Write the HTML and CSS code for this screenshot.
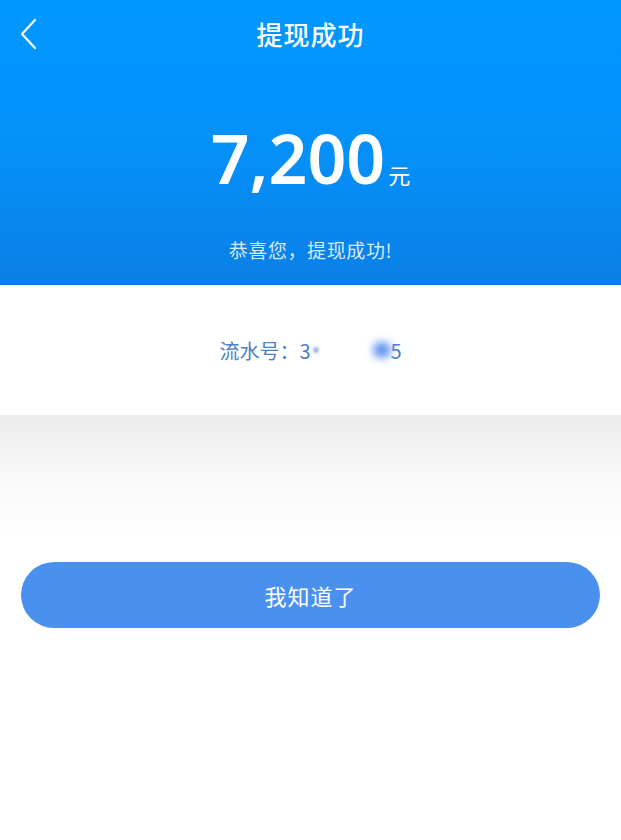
FILE: index.html
```html
<!DOCTYPE html>
<html lang="zh-CN">
<head>
    <meta charset="UTF-8">
    <meta name="viewport" content="width=device-width, initial-scale=1.0">
    <title>提现成功</title>
    <link rel="stylesheet" href="styles.css">
</head>
<body>

    <div class="header">
        <div class="nav">
            <a class="back" href="#">
                <svg width="18" height="32" viewBox="0 0 18 32">
                    <polyline points="15,2 2,16 15,30" fill="none" stroke="#fff" stroke-width="2.2" stroke-linecap="round" stroke-linejoin="round"/>
                </svg>
            </a>
            <div class="nav-title">提现成功</div>
        </div>
        <div class="amount">
            <span class="amount-num">7,200</span><span class="amount-unit">元</span>
        </div>
        <div class="tip">恭喜您，提现成功!</div>
    </div>

    <div class="serial">
        <span>流水号：3</span><span class="mask"><i class="dot"></i><i class="blob"></i></span><span>5</span>
    </div>

    <div class="shade"></div>

    <div class="actions">
        <button class="btn">我知道了</button>
    </div>

</body>
</html>
```

FILE: styles.css
```css
body {
    margin: 0;
    font-family: "Noto Sans CJK SC", "Noto Sans", sans-serif;
    background-color: #fff;
}
.header {
    height: 283px;
    background: linear-gradient(to bottom, #0098ff 0%, #0590f8 55%, #0a7fe6 100%);
    border-bottom: 2px solid #1670d0;
    color: #fff;
}
.nav {
    height: 66px;
    display: flex;
    align-items: center;
    justify-content: center;
    position: relative;
}
.back {
    position: absolute;
    left: 20px;
    top: 18px;
    display: block;
}
.nav-title {
    font-size: 26px;
    font-weight: 500;
    letter-spacing: 1px;
}
.amount {
    display: flex;
    justify-content: center;
    align-items: baseline;
    margin-top: 58px;
    line-height: 1;
}
.amount-num {
    font-family: "Noto Sans", sans-serif;
    font-size: 68px;
    font-weight: 600;
}
.amount-unit {
    font-size: 22px;
    margin-left: 3px;
}
.tip {
    text-align: center;
    font-size: 19px;
    letter-spacing: 0.6px;
    color: rgba(255, 255, 255, 0.85);
    margin-top: 44px;
}
.serial {
    height: 130px;
    display: flex;
    justify-content: center;
    align-items: center;
    font-size: 20px;
    color: #4a80c8;
}
.mask {
    display: inline-block;
    width: 80px;
    height: 24px;
    position: relative;
}
.mask .dot {
    position: absolute;
    left: 2px;
    top: 9px;
    width: 6px;
    height: 6px;
    border-radius: 50%;
    background: #a0b8d8;
    filter: blur(1px);
}
.mask .blob {
    position: absolute;
    right: 0;
    top: 4px;
    width: 18px;
    height: 16px;
    border-radius: 50%;
    background: #5a90f0;
    filter: blur(4px);
}
.shade {
    height: 120px;
    background: linear-gradient(to bottom, #ececec 0%, #f7f7f7 45%, #fff 100%);
}
.actions {
    padding: 27px 21px 0;
}
.btn {
    width: 100%;
    height: 66px;
    border: none;
    border-radius: 33px;
    background-color: #4a90ef;
    color: #fff;
    font-family: "Noto Sans CJK SC", sans-serif;
    font-size: 22px;
    letter-spacing: 1px;
}
```
